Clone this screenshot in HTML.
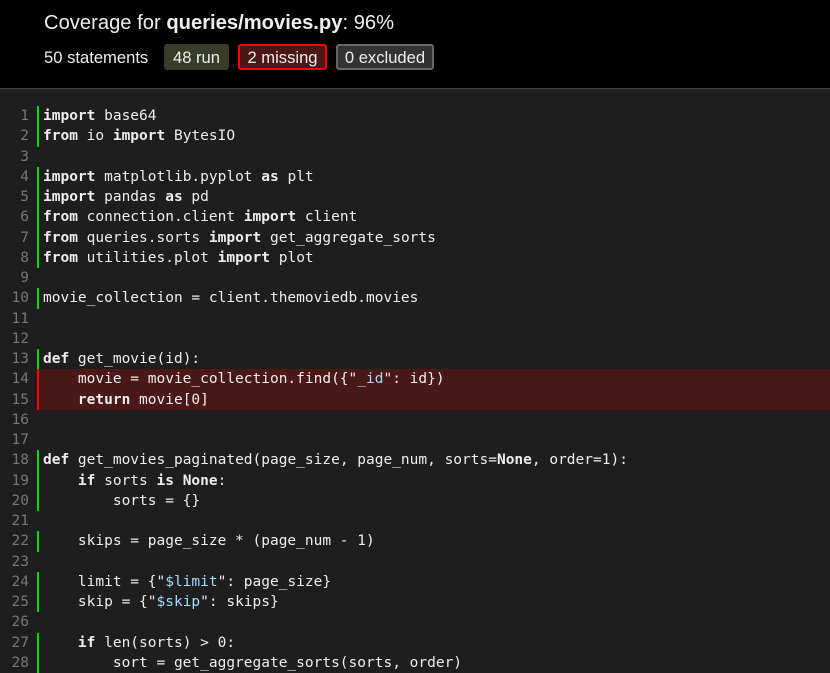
<!DOCTYPE html>
<html><head><style>
body{margin:0;background:#1e1e1e;width:830px;height:658px;overflow:hidden}
header{background:#000;height:89px;border-bottom:1px solid #444;box-sizing:border-box;font-family:"Liberation Sans","DejaVu Sans",sans-serif;color:#eee}
h1{margin:0;position:absolute;left:44px;top:11px;font-size:20.2px;font-weight:normal;line-height:24px}
.stats{position:absolute;left:44px;top:44px;font-size:16.6px;height:26px;line-height:28px}
.b{position:absolute;top:0;box-sizing:border-box;height:26px;line-height:24px;text-align:center;border-radius:3px;border:2px solid}
.run{background:#373d29;border-color:#373d29;left:120px;width:65px}
.mis{background:#4b1818;border-color:#ff0000;left:194px;width:89px}
.exc{background:#333;border-color:#666;left:292px;width:98px}
.code{position:absolute;top:106px;left:0;width:830px;font-family:"DejaVu Sans Mono","Liberation Mono",monospace;font-size:14.5px;color:#eee}
.l{height:20.25px;line-height:20.25px;position:relative;white-space:pre}
.n{position:absolute;left:0;width:29px;text-align:right;color:#777}
.t{position:absolute;left:37px;right:0;padding-left:4px;height:20.25px;border-left:2px solid transparent}
.r .t{border-color:#00dd00}
.m .t{border-color:#ff0000;background:#4b1818}
b{font-weight:bold}
.s{color:#9cdcfe}
</style></head><body>
<header>
<h1>Coverage for <b>queries/movies.py</b>: 96%</h1>
<div class="stats">50 statements<span class="b run">48 run</span><span class="b mis">2 missing</span><span class="b exc">0 excluded</span></div>
</header>
<div class="code">
<div class="l r"><span class="n">1</span><span class="t"><b>import</b> base64</span></div>
<div class="l r"><span class="n">2</span><span class="t"><b>from</b> io <b>import</b> BytesIO</span></div>
<div class="l"><span class="n">3</span><span class="t"></span></div>
<div class="l r"><span class="n">4</span><span class="t"><b>import</b> matplotlib.pyplot <b>as</b> plt</span></div>
<div class="l r"><span class="n">5</span><span class="t"><b>import</b> pandas <b>as</b> pd</span></div>
<div class="l r"><span class="n">6</span><span class="t"><b>from</b> connection.client <b>import</b> client</span></div>
<div class="l r"><span class="n">7</span><span class="t"><b>from</b> queries.sorts <b>import</b> get_aggregate_sorts</span></div>
<div class="l r"><span class="n">8</span><span class="t"><b>from</b> utilities.plot <b>import</b> plot</span></div>
<div class="l"><span class="n">9</span><span class="t"></span></div>
<div class="l r"><span class="n">10</span><span class="t">movie_collection = client.themoviedb.movies</span></div>
<div class="l"><span class="n">11</span><span class="t"></span></div>
<div class="l"><span class="n">12</span><span class="t"></span></div>
<div class="l r"><span class="n">13</span><span class="t"><b>def</b> get_movie(id):</span></div>
<div class="l m"><span class="n">14</span><span class="t">    movie = movie_collection.find({"<span class="s">_id</span>": id})</span></div>
<div class="l m"><span class="n">15</span><span class="t">    <b>return</b> movie[0]</span></div>
<div class="l"><span class="n">16</span><span class="t"></span></div>
<div class="l"><span class="n">17</span><span class="t"></span></div>
<div class="l r"><span class="n">18</span><span class="t"><b>def</b> get_movies_paginated(page_size, page_num, sorts=<b>None</b>, order=1):</span></div>
<div class="l r"><span class="n">19</span><span class="t">    <b>if</b> sorts <b>is</b> <b>None</b>:</span></div>
<div class="l r"><span class="n">20</span><span class="t">        sorts = {}</span></div>
<div class="l"><span class="n">21</span><span class="t"></span></div>
<div class="l r"><span class="n">22</span><span class="t">    skips = page_size * (page_num - 1)</span></div>
<div class="l"><span class="n">23</span><span class="t"></span></div>
<div class="l r"><span class="n">24</span><span class="t">    limit = {"<span class="s">$limit</span>": page_size}</span></div>
<div class="l r"><span class="n">25</span><span class="t">    skip = {"<span class="s">$skip</span>": skips}</span></div>
<div class="l"><span class="n">26</span><span class="t"></span></div>
<div class="l r"><span class="n">27</span><span class="t">    <b>if</b> len(sorts) &gt; 0:</span></div>
<div class="l r"><span class="n">28</span><span class="t">        sort = get_aggregate_sorts(sorts, order)</span></div>
</div>
</body></html>
